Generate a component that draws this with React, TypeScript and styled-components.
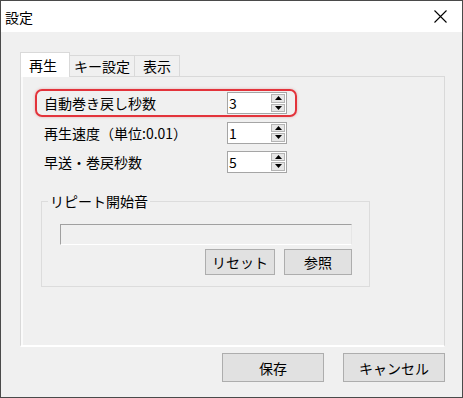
import * as React from "react";
import styled, { createGlobalStyle } from "styled-components";

const GlobalStyle = createGlobalStyle`
  html, body {
    margin: 0;
    padding: 0;
    background: #f0f0f0;
  }
  body {
    font-family: "Noto Sans CJK JP", "Noto Sans", sans-serif;
  }
`;

const Window = styled.div`
  width: 463px;
  height: 398px;
  box-sizing: border-box;
  border: 1px solid #4a4a4a;
  display: flex;
  flex-direction: column;
  background: #f0f0f0;
  color: #000;
  font-family: "Noto Sans CJK JP", "Noto Sans", sans-serif;
  font-size: 14px;
`;

const TitleBar = styled.div`
  height: 31px;
  background: #fff;
  display: flex;
  align-items: center;
  justify-content: space-between;
  padding-left: 4px;
`;

const Title = styled.span`
  font-size: 14px;
  line-height: 16px;
`;

const CloseButton = styled.div`
  width: 44px;
  height: 31px;
  display: flex;
  align-items: center;
  justify-content: center;
`;

const Body = styled.div`
  flex: 1;
  display: flex;
  flex-direction: column;
  padding: 20px 17px 0 19px;
`;

const TabStrip = styled.div`
  display: flex;
  align-items: flex-end;
  height: 24px;
`;

const Tab = styled.div<{ $active?: boolean; $w: number }>`
  box-sizing: border-box;
  width: ${(p) => p.$w}px;
  height: ${(p) => (p.$active ? 25 : 21)}px;
  margin-bottom: ${(p) => (p.$active ? -1 : 0)}px;
  margin-left: ${(p) => (p.$active ? 0 : -1)}px;
  position: relative;
  z-index: ${(p) => (p.$active ? 1 : 0)};
  border: 1px solid #d9d9d9;
  border-bottom: none;
  background: ${(p) => (p.$active ? "#fff" : "#f0f0f0")};
  display: flex;
  align-items: center;
  justify-content: center;
  line-height: 16px;
  padding-right: ${(p) => (p.$active ? 4 : 0)}px;
`;

const Panel = styled.div`
  box-sizing: border-box;
  height: 271px;
  border: 1px solid #d9d9d9;
  border-bottom: 2px solid #fff;
  box-shadow: inset 2px 0 #fafafa;
  padding: 12px 0 0 14px;
  display: flex;
  flex-direction: column;
`;

const HighlightRow = styled.div`
  box-sizing: border-box;
  width: 262px;
  height: 28px;
  border: 2px solid #e3333b;
  border-radius: 7px;
  box-shadow: 0 0 3px rgba(200, 60, 60, 0.35);
  display: flex;
  align-items: center;
  padding-left: 7px;
`;

const Row = styled.div`
  height: 27px;
  margin-top: 2px;
  display: flex;
  align-items: center;
  padding-left: 9px;
`;

const Label = styled.span`
  width: 183px;
  line-height: 16px;
  white-space: nowrap;
`;

const Spin = styled.div`
  box-sizing: border-box;
  width: 60px;
  height: 22px;
  border: 1px solid #a5a5a5;
  background: #fff;
  display: flex;
  align-items: stretch;
`;

const SpinValue = styled.span`
  flex: 1;
  padding-left: 1px;
  line-height: 20px;
`;

const SpinArrows = styled.div`
  width: 14px;
  margin: 1px 1px 1px 0;
  display: flex;
  flex-direction: column;
  gap: 1px;
`;

const ArrowButton = styled.div`
  flex: 1;
  box-sizing: border-box;
  border: 1px solid #b4b4b4;
  background: #e6e6e6;
  display: flex;
  align-items: center;
  justify-content: center;
`;

const Group = styled.fieldset`
  box-sizing: border-box;
  width: 329px;
  min-width: 0;
  margin: 18px 0 0 6px;
  padding: 0 17px 11px 6px;
  border: 1px solid #dcdcdc;
`;

const Legend = styled.legend`
  padding: 0 2px;
  line-height: 16px;
  font-size: 14px;
`;

const GroupContent = styled.div`
  margin-left: 12px;
  display: flex;
  flex-direction: column;
`;

const PathBox = styled.div`
  box-sizing: border-box;
  height: 21px;
  margin-top: 15px;
  border: 1px solid;
  border-color: #a0a0a0 #e6e6e6 #fff #a0a0a0;
  background: #f0f0f0;
`;

const ButtonRow = styled.div<{ $gap: number }>`
  display: flex;
  justify-content: flex-end;
  gap: ${(p) => p.$gap}px;
`;

const Button = styled.button<{ $w: number; $h: number }>`
  box-sizing: border-box;
  width: ${(p) => p.$w}px;
  height: ${(p) => p.$h}px;
  padding: 0;
  border: 1px solid #adadad;
  background: #e1e1e1;
  color: #000;
  font-family: inherit;
  font-size: 14px;
  line-height: 16px;
`;

const GroupButtons = styled(ButtonRow)`
  margin-top: 4px;
`;

const Footer = styled(ButtonRow)`
  margin-top: 6px;
`;

function Arrow({ up }: { up?: boolean }) {
  return (
    <svg width="7" height="4" viewBox="0 0 7 4">
      <path d={up ? "M3.5 0 L7 4 L0 4 Z" : "M0 0 L7 0 L3.5 4 Z"} fill="#000" />
    </svg>
  );
}

function Spinner({ value }: { value: string }) {
  return (
    <Spin>
      <SpinValue>{value}</SpinValue>
      <SpinArrows>
        <ArrowButton>
          <Arrow up />
        </ArrowButton>
        <ArrowButton>
          <Arrow />
        </ArrowButton>
      </SpinArrows>
    </Spin>
  );
}

export default function App() {
  return (
    <>
      <GlobalStyle />
      <Window>
        <TitleBar>
          <Title>設定</Title>
          <CloseButton>
            <svg width="13" height="13" viewBox="0 0 13 13">
              <path d="M0.5 0.5 L12.5 12.5 M12.5 0.5 L0.5 12.5" stroke="#000" strokeWidth="1.1" />
            </svg>
          </CloseButton>
        </TitleBar>
        <Body>
          <TabStrip>
            <Tab $active $w={50}>再生</Tab>
            <Tab $w={66}>キー設定</Tab>
            <Tab $w={46}>表示</Tab>
          </TabStrip>
          <Panel>
            <HighlightRow>
              <Label>自動巻き戻し秒数</Label>
              <Spinner value="3" />
            </HighlightRow>
            <Row>
              <Label>再生速度（単位:0.01）</Label>
              <Spinner value="1" />
            </Row>
            <Row>
              <Label>早送・巻戻秒数</Label>
              <Spinner value="5" />
            </Row>
            <Group>
              <Legend>リピート開始音</Legend>
              <GroupContent>
                <PathBox />
                <GroupButtons $gap={9}>
                  <Button $w={70} $h={26}>リセット</Button>
                  <Button $w={68} $h={26}>参照</Button>
                </GroupButtons>
              </GroupContent>
            </Group>
          </Panel>
          <Footer $gap={19}>
            <Button $w={102} $h={29}>保存</Button>
            <Button $w={102} $h={29}>キャンセル</Button>
          </Footer>
        </Body>
      </Window>
    </>
  );
}
